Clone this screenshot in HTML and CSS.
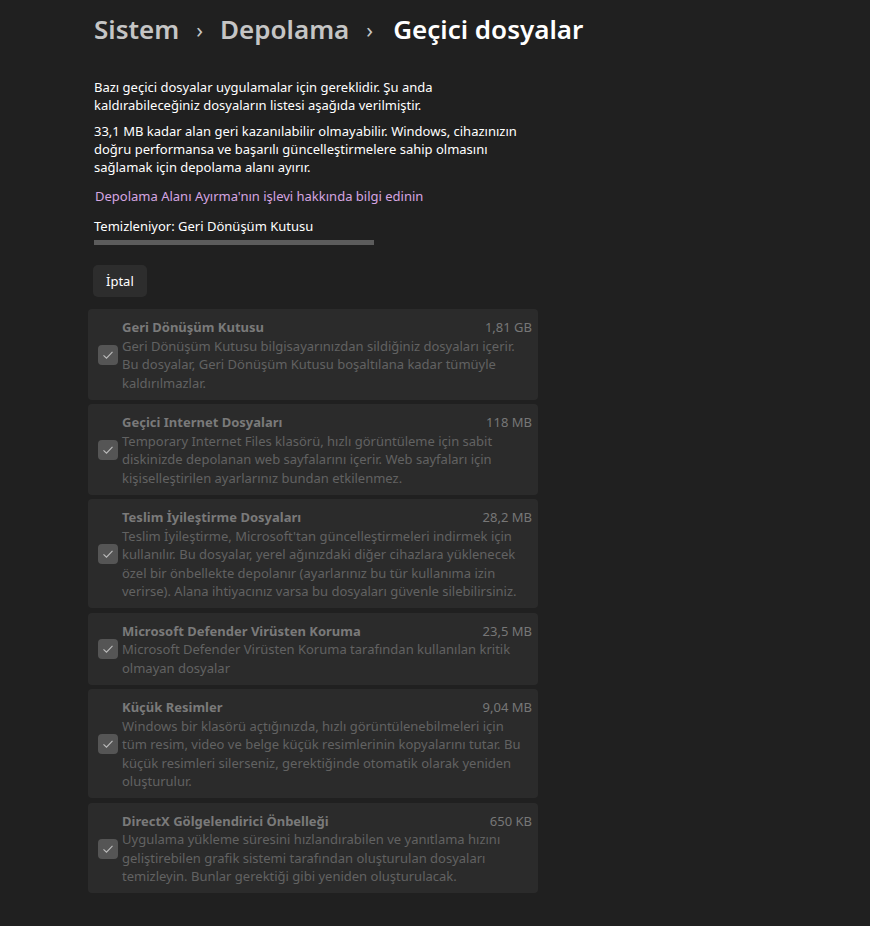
FILE: index.html
```html
<!DOCTYPE html>
<html>
<head>
    <title>Geçici dosyalar</title>
    <meta charset="utf-8">
    <link rel="stylesheet" href="styles.css">
</head>
<body>
<div class="page">
    <h1 class="breadcrumb">
        <span class="crumb">Sistem</span>
        <span class="sep">&#8250;</span>
        <span class="crumb">Depolama</span>
        <span class="sep">&#8250;</span>
        <span class="crumb current">Geçici dosyalar</span>
    </h1>

    <div class="intro">
        <p>Bazı geçici dosyalar uygulamalar için gereklidir. Şu anda kaldırabileceğiniz dosyaların listesi aşağıda verilmiştir.</p>
        <p>33,1 MB kadar alan geri kazanılabilir olmayabilir. Windows, cihazınızın doğru performansa ve başarılı güncelleştirmelere sahip olmasını sağlamak için depolama alanı ayırır.</p>
        <a class="link" href="#">Depolama Alanı Ayırma'nın işlevi hakkında bilgi edinin</a>
        <div class="status">Temizleniyor: Geri Dönüşüm Kutusu</div>
        <div class="progress"></div>
        <button class="cancel-btn" type="button">İptal</button>
    </div>

    <div class="list">
        <div class="item">
            <span class="check"><svg width="12" height="12" viewBox="0 0 12 12"><path d="M1.5 6.3 L4.5 9.2 L10.5 2.8" fill="none" stroke="#bdbdbd" stroke-width="1.1"/></svg></span>
            <div class="item-body">
                <div class="item-head"><span class="item-title">Geri Dönüşüm Kutusu</span><span class="item-size">1,81 GB</span></div>
                <div class="item-desc">Geri Dönüşüm Kutusu bilgisayarınızdan sildiğiniz dosyaları içerir. Bu dosyalar, Geri Dönüşüm Kutusu boşaltılana kadar tümüyle kaldırılmazlar.</div>
            </div>
        </div>
        <div class="item">
            <span class="check"><svg width="12" height="12" viewBox="0 0 12 12"><path d="M1.5 6.3 L4.5 9.2 L10.5 2.8" fill="none" stroke="#bdbdbd" stroke-width="1.1"/></svg></span>
            <div class="item-body">
                <div class="item-head"><span class="item-title">Geçici Internet Dosyaları</span><span class="item-size">118 MB</span></div>
                <div class="item-desc">Temporary Internet Files klasörü, hızlı görüntüleme için sabit diskinizde depolanan web sayfalarını içerir. Web sayfaları için kişiselleştirilen ayarlarınız bundan etkilenmez.</div>
            </div>
        </div>
        <div class="item">
            <span class="check"><svg width="12" height="12" viewBox="0 0 12 12"><path d="M1.5 6.3 L4.5 9.2 L10.5 2.8" fill="none" stroke="#bdbdbd" stroke-width="1.1"/></svg></span>
            <div class="item-body">
                <div class="item-head"><span class="item-title">Teslim İyileştirme Dosyaları</span><span class="item-size">28,2 MB</span></div>
                <div class="item-desc">Teslim İyileştirme, Microsoft'tan güncelleştirmeleri indirmek için kullanılır. Bu dosyalar, yerel ağınızdaki diğer cihazlara yüklenecek özel bir önbellekte depolanır (ayarlarınız bu tür kullanıma izin verirse). Alana ihtiyacınız varsa bu dosyaları güvenle silebilirsiniz.</div>
            </div>
        </div>
        <div class="item">
            <span class="check"><svg width="12" height="12" viewBox="0 0 12 12"><path d="M1.5 6.3 L4.5 9.2 L10.5 2.8" fill="none" stroke="#bdbdbd" stroke-width="1.1"/></svg></span>
            <div class="item-body">
                <div class="item-head"><span class="item-title">Microsoft Defender Virüsten Koruma</span><span class="item-size">23,5 MB</span></div>
                <div class="item-desc">Microsoft Defender Virüsten Koruma tarafından kullanılan kritik olmayan dosyalar</div>
            </div>
        </div>
        <div class="item">
            <span class="check"><svg width="12" height="12" viewBox="0 0 12 12"><path d="M1.5 6.3 L4.5 9.2 L10.5 2.8" fill="none" stroke="#bdbdbd" stroke-width="1.1"/></svg></span>
            <div class="item-body">
                <div class="item-head"><span class="item-title">Küçük Resimler</span><span class="item-size">9,04 MB</span></div>
                <div class="item-desc">Windows bir klasörü açtığınızda, hızlı görüntülenebilmeleri için tüm resim, video ve belge küçük resimlerinin kopyalarını tutar. Bu küçük resimleri silerseniz, gerektiğinde otomatik olarak yeniden oluşturulur.</div>
            </div>
        </div>
        <div class="item">
            <span class="check"><svg width="12" height="12" viewBox="0 0 12 12"><path d="M1.5 6.3 L4.5 9.2 L10.5 2.8" fill="none" stroke="#bdbdbd" stroke-width="1.1"/></svg></span>
            <div class="item-body">
                <div class="item-head"><span class="item-title">DirectX Gölgelendirici Önbelleği</span><span class="item-size">650 KB</span></div>
                <div class="item-desc">Uygulama yükleme süresini hızlandırabilen ve yanıtlama hızını geliştirebilen grafik sistemi tarafından oluşturulan dosyaları temizleyin. Bunlar gerektiği gibi yeniden oluşturulacak.</div>
            </div>
        </div>
    </div>
</div>
</body>
</html>
```

FILE: styles.css
```css
body {
    margin: 0;
    background-color: #202020;
    font-family: "Noto Sans", "Open Sans", sans-serif;
    color: #ffffff;
}
.page {
    padding: 10px 0 0 88px;
    width: 450px;
}
.breadcrumb {
    display: flex;
    align-items: center;
    gap: 17px;
    margin: 0 0 30px 6px;
    font-size: 26px;
    font-weight: 600;
    line-height: 38px;
    white-space: nowrap;
}
.crumb {
    color: #c5c5c5;
}
.crumb.current {
    color: #ffffff;
    margin-left: 3px;
}
.sep {
    color: #c5c5c5;
    font-size: 22px;
    font-weight: 400;
}
.intro {
    padding-left: 6px;
    font-size: 13px;
    line-height: 18px;
}
.intro p {
    margin: 0 0 8px 0;
    width: 430px;
}
.link {
    display: block;
    color: #d6a6e2;
    text-decoration: none;
    margin: 11px 0 12px 1px;
}
.status {
    margin-bottom: 5px;
}
.progress {
    width: 280px;
    height: 5px;
    background-color: #5c5c5c;
}
.cancel-btn {
    margin: 20px 0 12px -1px;
    height: 32px;
    padding: 0 13px;
    border: none;
    border-radius: 5px;
    background-color: #2d2d2d;
    color: #ffffff;
    font-family: inherit;
    font-size: 13px;
}
.list {
    display: flex;
    flex-direction: column;
    gap: 4.5px;
}
.item {
    display: flex;
    align-items: center;
    background-color: #2b2b2b;
    border-radius: 4px;
    padding: 9px 6px 7.5px 10px;
}
.check {
    flex: 0 0 20px;
    height: 20px;
    margin-right: 4px;
    border-radius: 4px;
    background-color: #555555;
    display: flex;
    align-items: center;
    justify-content: center;
}
.item-body {
    flex: 1;
    font-size: 13px;
    line-height: 18.5px;
}
.item-head {
    display: flex;
    justify-content: space-between;
}
.item-title {
    font-weight: 700;
    color: #7a7a7a;
}
.item-size {
    color: #777777;
}
.item-desc {
    margin-right: 10px;
    color: #626262;
}
```
